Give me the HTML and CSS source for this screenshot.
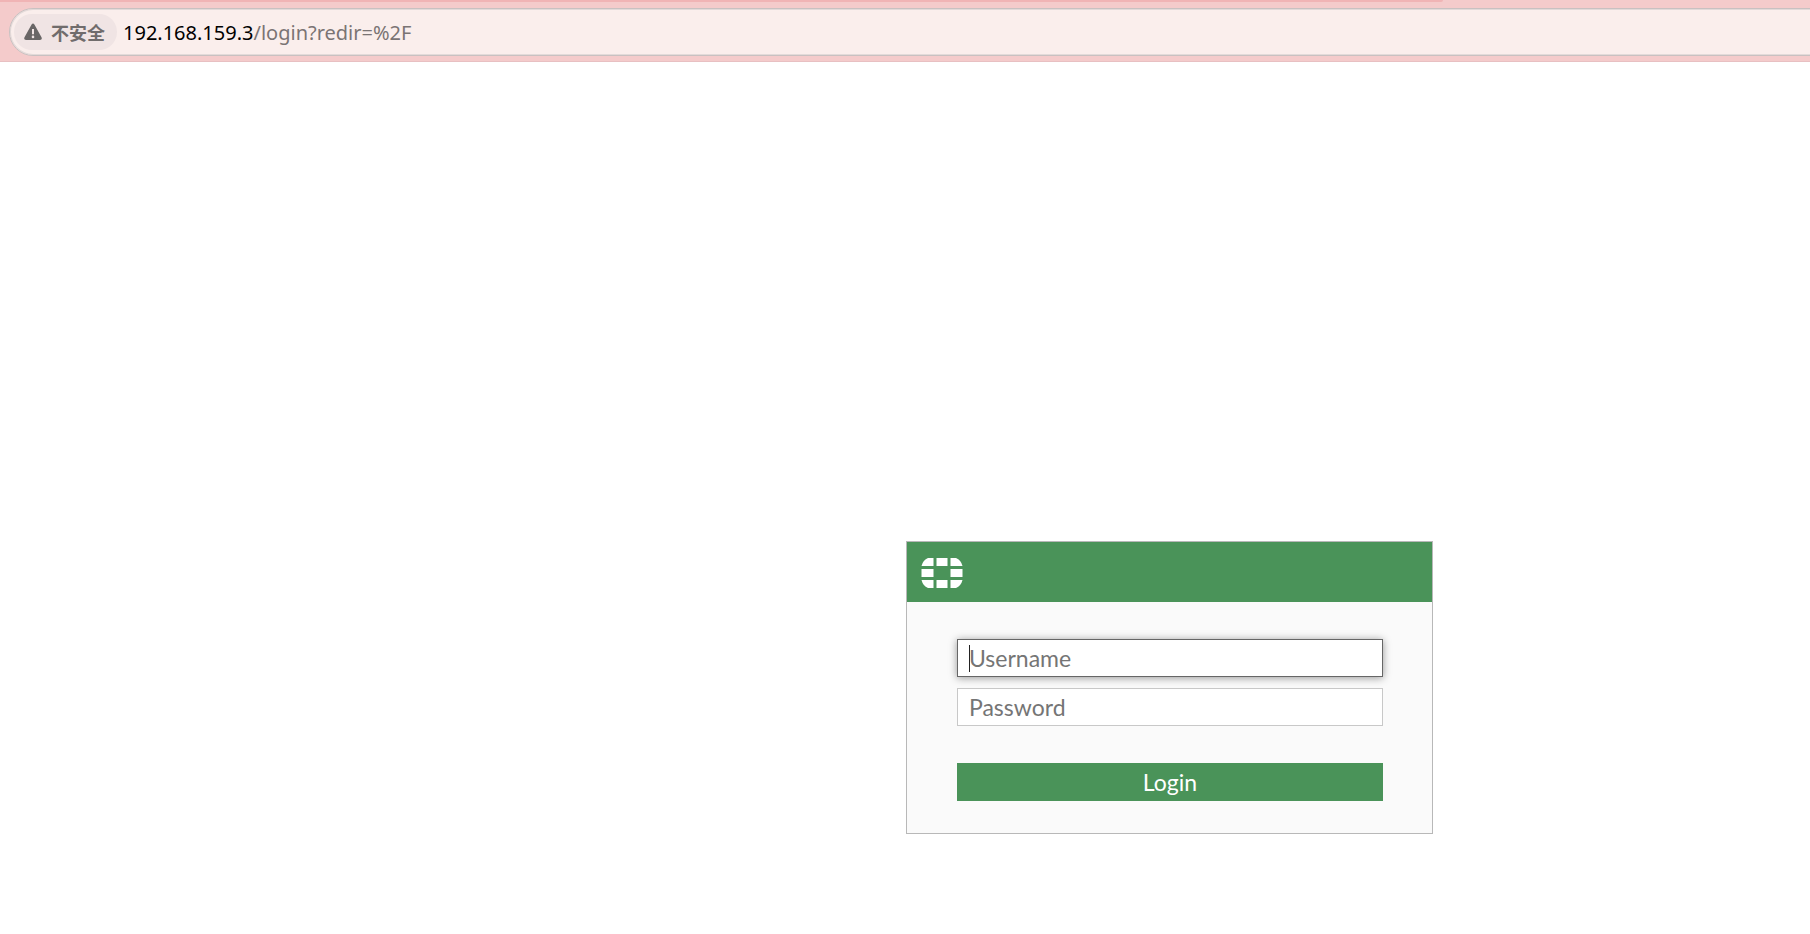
FILE: index.html
```html
<!DOCTYPE html>
<html lang="zh-CN">
<head>
    <meta charset="UTF-8">
    <meta name="viewport" content="width=device-width, initial-scale=1.0">
    <title>Login</title>
    <link rel="stylesheet" href="styles.css">
</head>
<body>
    <header class="toolbar">
        <div class="tab-edge"></div>
        <div class="address-bar">
            <button type="button" class="site-info">
                <svg class="warning-icon" width="20" height="18" viewBox="0 0 20 18" aria-hidden="true">
                    <path fill="#696666" fill-rule="evenodd" d="M8.6 1.6Q10-.6 11.4 1.6L18.5 14.2Q19.6 17 17 17H3Q.4 17 1.5 14.2ZM9 6V11.2H11V6ZM10 12.6A1.3 1.3 0 1 0 10 15.2A1.3 1.3 0 1 0 10 12.6Z"/>
                </svg>
                <span>不安全</span>
            </button>
            <div class="url"><span class="host">192.168.159.3</span>/login?redir=%2F</div>
        </div>
    </header>
    <main class="page">
        <form class="login-card" onsubmit="return false">
            <div class="login-header">
                <svg class="logo" width="42" height="30" viewBox="0 0 42 30" aria-hidden="true">
                    <g fill="#fff">
                        <path d="M7 0H12.5V8H.5Q2 2 7 0Z"/>
                        <path d="M15.5 0H26.5V8H15.5Z"/>
                        <path d="M29.5 0H35Q40 2 41.5 8H29.5Z"/>
                        <path d="M.5 11H12.5V19H.5Z"/>
                        <path d="M29.5 11H41.5V19H29.5Z"/>
                        <path d="M.5 22H12.5V30H7Q2 28 .5 22Z"/>
                        <path d="M15.5 22H26.5V30H15.5Z"/>
                        <path d="M29.5 22H41.5Q40 28 35 30H29.5Z"/>
                    </g>
                </svg>
            </div>
            <div class="login-body">
                <input type="text" class="field active" name="username" placeholder="Username" aria-label="Username">
                <input type="password" class="field" name="password" placeholder="Password" aria-label="Password">
                <button type="submit" class="login-button">Login</button>
            </div>
        </form>
    </main>
</body>
</html>
```

FILE: styles.css
```css
* {
    box-sizing: border-box;
}
body {
    margin: 0;
    background: #fff;
    font-family: Lato, sans-serif;
}
.toolbar {
    background: #f4cbcb;
    border-bottom: 1px solid #e8c0c2;
    padding-bottom: 5px;
    overflow: hidden;
}
.tab-edge {
    width: 80%;
    height: 2px;
    max-width: 1443px;
    background: #f0b4b5;
    border-bottom-right-radius: 2px;
}
/* runs past the right side of the window */
.address-bar {
    display: flex;
    align-items: center;
    gap: 6px;
    height: 48px;
    margin: 6px -24px 0 9px;
    padding-left: 4px;
    background: #faeeec;
    border: 1px solid #c8c1c1;
    border-radius: 24px;
    box-shadow: inset 0 0 0 1px #e3dad9;
}
.site-info {
    display: flex;
    align-items: center;
    gap: 8px;
    height: 36px;
    padding: 0 12px 1px 9px;
    border: 0;
    border-radius: 18px;
    background: #f0e4e4;
    color: #706c6c;
    font-family: "Noto Sans CJK SC", sans-serif;
    font-size: 18px;
    font-weight: bold;
}
.url {
    color: #7a7474;
    font-family: "Noto Sans", sans-serif;
    font-size: 20px;
    white-space: nowrap;
}
.host {
    color: #000;
}
.page {
    padding-top: 479px;
}
/* the card starts at the middle of the window */
.login-card {
    width: 527px;
    margin-left: calc(50% + 1px);
    background: #fafafa;
    border: 1px solid #b8b8b8;
}
.login-header {
    display: flex;
    align-items: center;
    height: 60px;
    padding: 2px 14px 0;
    background: #4a9359;
}
.login-body {
    display: flex;
    flex-direction: column;
    padding: 37px 49px 32px 50px;
}
.field {
    height: 38px;
    margin-bottom: 11px;
    padding: 0 11px;
    border: 1px solid #c8c8c8;
    border-radius: 0;
    background: #fff;
    font-family: Lato, sans-serif;
    font-size: 23px;
    outline: none;
}
.field::placeholder {
    color: #757575;
}
/* text cursor is drawn as a thin line at the start of the field */
.field.active {
    border-color: #666;
    box-shadow: 0 1px 8px rgba(0, 0, 0, 0.4);
    background: linear-gradient(#222, #222) 11px 5px / 1px 27px no-repeat #fff;
    caret-color: transparent;
}
.login-button {
    height: 38px;
    margin-top: 26px;
    padding: 0;
    border: 0;
    background: #4a9359;
    color: #fff;
    font-family: Lato, sans-serif;
    font-size: 23px;
    cursor: pointer;
}
```
